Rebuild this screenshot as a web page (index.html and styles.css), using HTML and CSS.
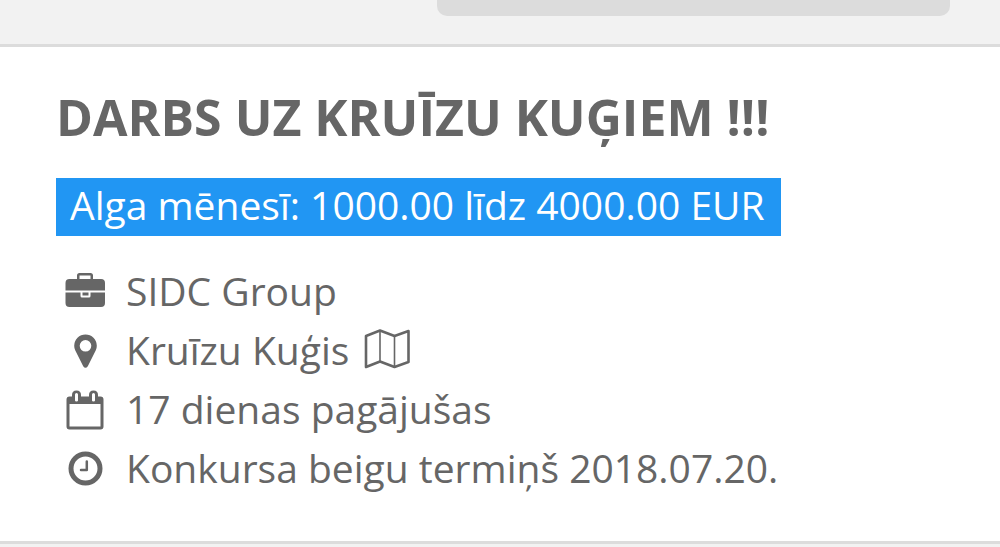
FILE: index.html
```html
<!DOCTYPE html>
<html lang="lv">
<head>
<meta charset="utf-8">
<meta name="viewport" content="width=device-width, initial-scale=1">
<title>Darbs uz kruīzu kuģiem</title>
<link rel="stylesheet" href="styles.css">
</head>
<body>
<header class="topbar"><div class="field"></div></header>
<main class="job">
  <h1 class="title">DARBS UZ KRUĪZU KUĢIEM !!!</h1>
  <p class="salary">Alga mēnesī: 1000.00 līdz 4000.00 EUR</p>
  <ul class="details">
    <li class="detail">
      <svg class="icon" viewBox="0 0 42 42" aria-hidden="true"><path fill="currentColor" fill-rule="evenodd" d="M13 9V5.500q0-2.500 2.500-2.500h11q2.500 0 2.500 2.500V9h8q4 0 4 4v7.500H1.500V13q0-4 4-4zM15.500 9h11V5.500h-11zM1.500 22.500H16.500V26q0 1.500 1.500 1.500h7q1.500 0 1.500-1.500v-3.500H41V33q0 4-4 4H5.500q-4 0-4-4zM18.500 22.500h6v3h-6z"/></svg>
      <span>SIDC Group</span>
    </li>
    <li class="detail">
      <svg class="icon" viewBox="0 0 42 42" aria-hidden="true"><path fill="currentColor" fill-rule="evenodd" d="M21.500 5.500a11.300 11.300 0 0 1 11.300 11.300q0 2.500-1 4.500l-8 16q-2.300 3-4.600 0l-8-16q-1-2-1-4.500A11.300 11.300 0 0 1 21.500 5.500zm0 5.500a5.800 5.800 0 1 0 0 11.600 5.800 5.800 0 0 0 0-11.600z"/></svg>
      <span>Kruīzu Kuģis</span>
      <svg class="map" viewBox="0 0 48 42" aria-hidden="true"><g fill="none" stroke="currentColor" stroke-linejoin="round"><path stroke-width="2.600" d="M3 7l14-5.500L31.500 7 45.500 2v31l-14 5L17 32.500 3 38z"/><path stroke-width="1.600" d="M17 2v31M31.500 7v31"/></g></svg>
    </li>
    <li class="detail">
      <svg class="icon" viewBox="0 0 42 42" aria-hidden="true"><path fill="currentColor" fill-rule="evenodd" d="M5.500 8.500H8V7q0-4.500 4.500-4.500T17 7v1.500h8V7q0-4.500 4.500-4.500T34 7v1.500h2.500q3 0 3 3v27q0 3-3 3h-31q-3 0-3-3v-27q0-3 3-3zM5.500 16v22.500h31V16zM11 6.500v6q0 1 1.500 1t1.500-1v-6q0-1.500-1.500-1.500T11 6.500zm17 0v6q0 1 1.500 1t1.500-1v-6q0-1.500-1.500-1.500T28 6.500z"/></svg>
      <span>17 dienas pagājušas</span>
    </li>
    <li class="detail">
      <svg class="icon" viewBox="0 0 42 42" aria-hidden="true"><circle cx="21.500" cy="21.500" r="14.500" fill="none" stroke="currentColor" stroke-width="5"/><path fill="none" stroke="currentColor" stroke-width="2.500" stroke-linecap="round" stroke-linejoin="round" d="M22.800 14.500V23H17"/></svg>
      <span>Konkursa beigu termiņš 2018.07.20.</span>
    </li>
  </ul>
</main>
</body>
</html>
```
FILE: styles.css
```css
* { box-sizing: border-box; }
body { margin: 0; background: #f2f2f2; color: #666; font-family: "Open Sans", sans-serif; font-size: 39px; }
.topbar { display: flex; justify-content: flex-end; align-items: flex-start; height: 44px; padding-right: 50px; }
.field { width: 54%; height: 16px; background: #dcdcdc; border-radius: 0 0 10px 10px; }
.job { padding: 36px 56px 44px; background: #fff; border-top: 3px solid #dcdcdc; border-bottom: 3px solid #dcdcdc; }
.title { margin: 0; font-size: 50px; line-height: 68px; font-weight: 700; }
.salary { width: fit-content; margin: 27px 0 0; padding: 0 16px 4px 14px; background: #2196f3; color: #fff; line-height: 54px; }
.details { margin: 25px 0 0; padding: 0; list-style: none; }
.detail { display: flex; align-items: center; line-height: 59px; padding-left: 8px; }
.icon { flex: none; width: 42px; height: 42px; margin-right: 20px; }
.map { flex: none; width: 48px; height: 42px; margin-left: 14px; }
```
